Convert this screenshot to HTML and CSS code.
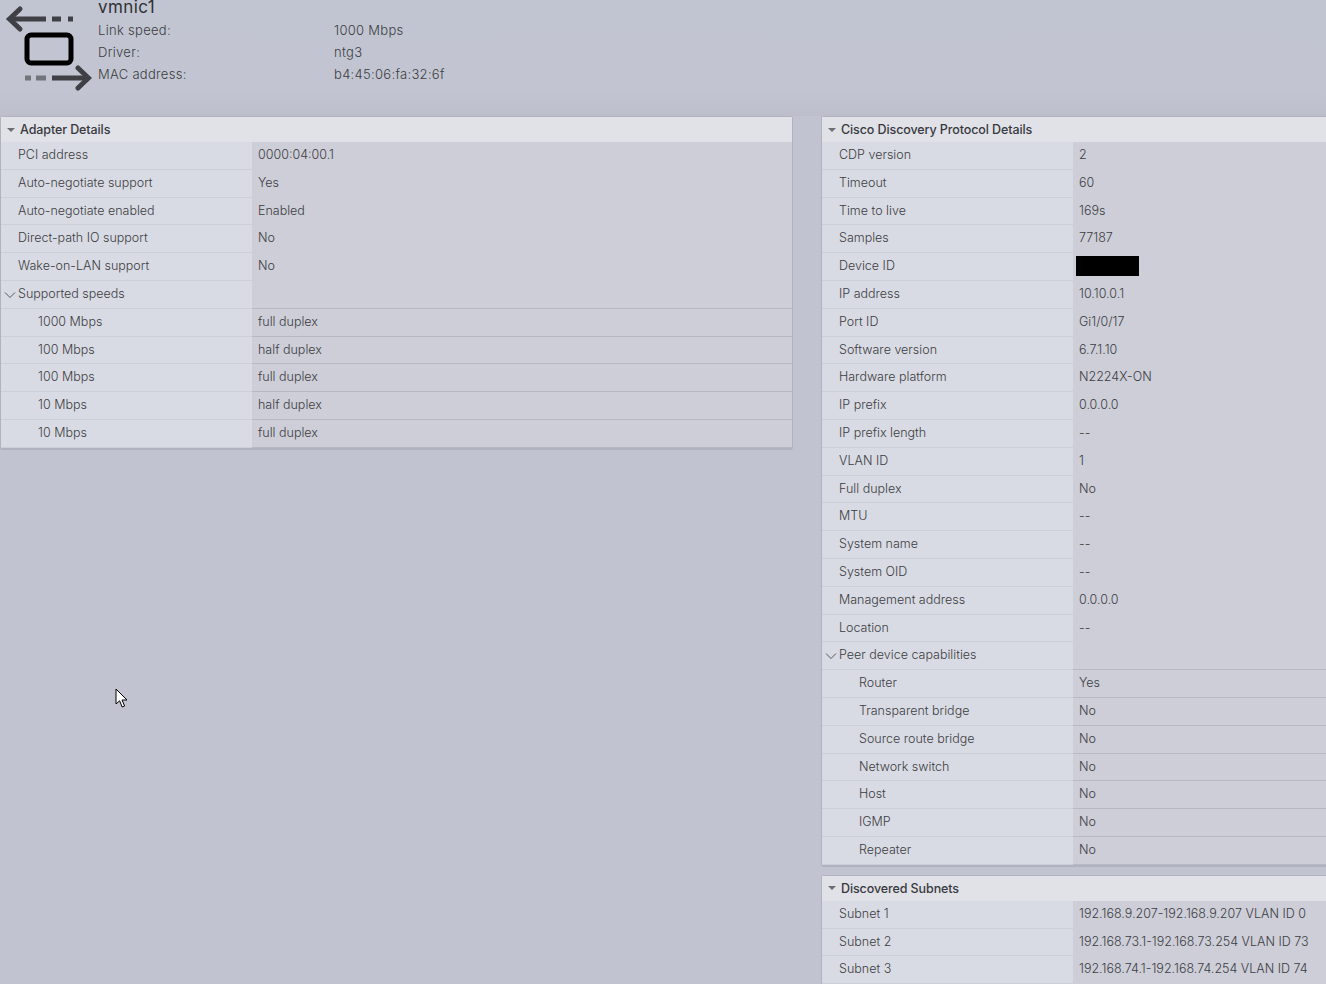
FILE: index.html
```html
<!DOCTYPE html>
<html lang="en">
<head>
    <meta charset="UTF-8">
    <title>vmnic1</title>
    <link rel="stylesheet" href="styles.css">
</head>
<body>
    <div class="page">
        <div class="nic-header">
            <svg class="nic-icon" width="92" height="92" viewBox="0 0 92 92">
                <g fill="none" stroke="#3f4046" stroke-width="5">
                    <path d="M46 19H11"/>
                    <path d="M20 9L9.5 19L20 29" stroke-linecap="round"/>
                    <path d="M52 19H61M68 19H73"/>
                    <rect x="27" y="35" width="44" height="28" rx="4" stroke="#000"/>
                    <path d="M52 78H87"/>
                    <path d="M78 68L88.5 78L78 88" stroke-linecap="round"/>
                    <path d="M25 78H31M36 78H46" stroke="#73757d"/>
                </g>
            </svg>
            <div class="nic-info">
                <h1 class="nic-name">vmnic1</h1>
                <div class="nic-line"><span class="nic-key">Link speed:</span><span>1000 Mbps</span></div>
                <div class="nic-line"><span class="nic-key">Driver:</span><span>ntg3</span></div>
                <div class="nic-line"><span class="nic-key">MAC address:</span><span>b4:45:06:fa:32:6f</span></div>
            </div>
        </div>

        <div class="columns">
            <div class="column">
                <div class="panel">
                    <div class="panel-title"><span class="caret"></span>Adapter Details</div>
                    <div class="row"><div class="label">PCI address</div><div class="value">0000:04:00.1</div></div>
                    <div class="row"><div class="label">Auto-negotiate support</div><div class="value">Yes</div></div>
                    <div class="row"><div class="label">Auto-negotiate enabled</div><div class="value">Enabled</div></div>
                    <div class="row"><div class="label">Direct-path IO support</div><div class="value">No</div></div>
                    <div class="row"><div class="label">Wake-on-LAN support</div><div class="value">No</div></div>
                    <div class="row sub"><div class="label"><svg class="chevron" width="12" height="8" viewBox="0 0 12 8"><path d="M1 1.5L6 6.5L11 1.5" fill="none" stroke="#55565c"/></svg>Supported speeds</div><div class="value"></div></div>
                    <div class="row sub"><div class="label child">1000 Mbps</div><div class="value">full duplex</div></div>
                    <div class="row sub"><div class="label child">100 Mbps</div><div class="value">half duplex</div></div>
                    <div class="row sub"><div class="label child">100 Mbps</div><div class="value">full duplex</div></div>
                    <div class="row sub"><div class="label child">10 Mbps</div><div class="value">half duplex</div></div>
                    <div class="row sub"><div class="label child">10 Mbps</div><div class="value">full duplex</div></div>
                </div>
            </div>

            <div class="column">
                <div class="panel">
                    <div class="panel-title"><span class="caret"></span>Cisco Discovery Protocol Details</div>
                    <div class="row"><div class="label">CDP version</div><div class="value">2</div></div>
                    <div class="row"><div class="label">Timeout</div><div class="value">60</div></div>
                    <div class="row"><div class="label">Time to live</div><div class="value">169s</div></div>
                    <div class="row"><div class="label">Samples</div><div class="value">77187</div></div>
                    <div class="row"><div class="label">Device ID</div><div class="value"><span class="redacted"></span></div></div>
                    <div class="row"><div class="label">IP address</div><div class="value">10.10.0.1</div></div>
                    <div class="row"><div class="label">Port ID</div><div class="value">Gi1/0/17</div></div>
                    <div class="row"><div class="label">Software version</div><div class="value">6.7.1.10</div></div>
                    <div class="row"><div class="label">Hardware platform</div><div class="value">N2224X-ON</div></div>
                    <div class="row"><div class="label">IP prefix</div><div class="value">0.0.0.0</div></div>
                    <div class="row"><div class="label">IP prefix length</div><div class="value">--</div></div>
                    <div class="row"><div class="label">VLAN ID</div><div class="value">1</div></div>
                    <div class="row"><div class="label">Full duplex</div><div class="value">No</div></div>
                    <div class="row"><div class="label">MTU</div><div class="value">--</div></div>
                    <div class="row"><div class="label">System name</div><div class="value">--</div></div>
                    <div class="row"><div class="label">System OID</div><div class="value">--</div></div>
                    <div class="row"><div class="label">Management address</div><div class="value">0.0.0.0</div></div>
                    <div class="row"><div class="label">Location</div><div class="value">--</div></div>
                    <div class="row sub"><div class="label"><svg class="chevron" width="12" height="8" viewBox="0 0 12 8"><path d="M1 1.5L6 6.5L11 1.5" fill="none" stroke="#55565c"/></svg>Peer device capabilities</div><div class="value"></div></div>
                    <div class="row sub"><div class="label child">Router</div><div class="value">Yes</div></div>
                    <div class="row sub"><div class="label child">Transparent bridge</div><div class="value">No</div></div>
                    <div class="row sub"><div class="label child">Source route bridge</div><div class="value">No</div></div>
                    <div class="row sub"><div class="label child">Network switch</div><div class="value">No</div></div>
                    <div class="row sub"><div class="label child">Host</div><div class="value">No</div></div>
                    <div class="row sub"><div class="label child">IGMP</div><div class="value">No</div></div>
                    <div class="row sub"><div class="label child">Repeater</div><div class="value">No</div></div>
                </div>

                <div class="panel">
                    <div class="panel-title"><span class="caret"></span>Discovered Subnets</div>
                    <div class="row"><div class="label">Subnet 1</div><div class="value">192.168.9.207-192.168.9.207 VLAN ID 0</div></div>
                    <div class="row"><div class="label">Subnet 2</div><div class="value">192.168.73.1-192.168.73.254 VLAN ID 73</div></div>
                    <div class="row"><div class="label">Subnet 3</div><div class="value">192.168.74.1-192.168.74.254 VLAN ID 74</div></div>
                </div>
            </div>
        </div>

        <svg class="cursor" width="14" height="21" viewBox="0 0 14 21">
            <path d="M1 1V16L4.6 12.8L7.2 19L9.6 18L7 12H12Z" fill="#fff" stroke="#000"/>
        </svg>
    </div>
</body>
</html>
```

FILE: styles.css
```css
html, body {
    margin: 0;
    height: 100%;
    overflow: hidden;
}

body {
    background: #c1c4d0;
    font-family: "Inter", "Liberation Sans", sans-serif;
    font-size: 12.5px;
    font-weight: 300;
    color: #3c3d42;
}

.page {
    position: relative;
    height: 984px;
    overflow: hidden;
}

.nic-header {
    display: flex;
    height: 116px;
    background: linear-gradient(180deg, #c1c5d1 0%, #c2c5d1 80%, #bcbfcb 100%);
}

.nic-icon {
    flex: none;
    margin-right: 6px;
}

.nic-info {
    margin-top: -3px;
}

.nic-name {
    margin: 0 0 2px 0;
    font-size: 17px;
    font-weight: 400;
    line-height: 20px;
    letter-spacing: 0.4px;
    color: #2f3034;
}

.nic-line {
    display: flex;
    height: 22px;
    line-height: 22px;
    font-size: 13px;
    letter-spacing: 0.3px;
}

.nic-key {
    width: 236px;
}

.columns {
    display: flex;
    gap: 28px;
}

.column {
    flex: none;
    width: 793px;
}

.column + .column {
    width: 540px;
}

.panel {
    background: #d9dbe4;
    border: 1px solid #b0b3bf;
    border-width: 1px 1px 2px 1px;
    border-radius: 3px;
    margin-bottom: 8px;
}

.panel-title {
    display: flex;
    align-items: center;
    height: 25px;
    background: #e0e2e8;
    font-weight: 500;
    letter-spacing: -0.1px;
    color: #38393e;
}

.caret {
    width: 0;
    height: 0;
    margin: 0 5px 0 6px;
    border-left: 4px solid transparent;
    border-right: 4px solid transparent;
    border-top: 4px solid #6d6e75;
}

.row {
    display: flex;
    height: 27.8px;
    box-sizing: border-box;
    border-bottom: 1px solid #cdcfd8;
    line-height: 26.8px;
}

.label {
    position: relative;
    flex: none;
    width: 251px;
    padding-left: 17px;
    box-sizing: border-box;
}

.label.child {
    padding-left: 37px;
}

.chevron {
    position: absolute;
    left: 3px;
    top: 10px;
}

.value {
    flex: 1;
    padding-left: 6px;
    background: #cdced8;
    white-space: nowrap;
}

.row.sub .value {
    box-shadow: 0 1px 0 #b6b8c4;
}

.redacted {
    display: block;
    width: 63px;
    height: 20px;
    margin: 3px 0 0 -3px;
    background: #000;
}

.cursor {
    position: absolute;
    left: 115px;
    top: 688px;
}
```
